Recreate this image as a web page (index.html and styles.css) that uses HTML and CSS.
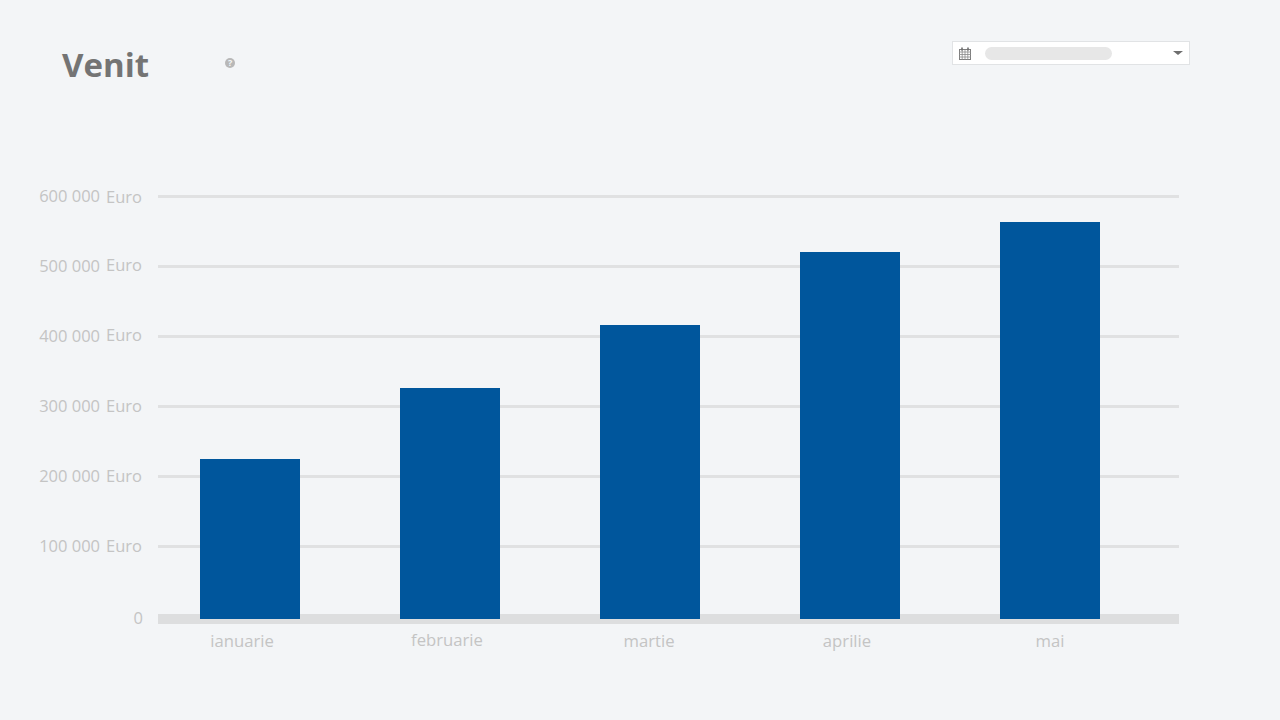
FILE: index.html
```html
<!DOCTYPE html>
<html lang="ro">
<head>
<meta charset="utf-8">
<title>Venit</title>
<link rel="stylesheet" href="styles.css">
</head>
<body>
<header class="header">
  <h1 class="title">Venit</h1>
  <span class="help">?</span>
  <div class="picker">
    <svg class="cal" width="12" height="13" viewBox="0 0 12 13" aria-hidden="true">
      <rect x="0.5" y="2.5" width="11" height="10" fill="#fff" stroke="#7d7d7d"/>
      <path d="M0 5h12M0 7.5h12M0 10h12M3.2 3v10M6 3v10M8.8 3v10" stroke="#8a8a8a" stroke-width="0.8" fill="none"/>
      <path d="M3 0.5v3M9 0.5v3" stroke="#6f6f6f" stroke-width="1.6" fill="none"/>
    </svg>
    <span class="pill"></span>
    <span class="caret"></span>
  </div>
</header>
<main class="chart">
  <div class="row"><div class="ylabel"><span>600 000</span><span class="unit low">Euro</span></div><div class="line"></div></div>
  <div class="row"><div class="ylabel"><span>500 000</span><span class="unit high">Euro</span></div><div class="line"></div></div>
  <div class="row"><div class="ylabel"><span>400 000</span><span class="unit high">Euro</span></div><div class="line"></div></div>
  <div class="row"><div class="ylabel"><span>300 000</span><span class="unit">Euro</span></div><div class="line"></div></div>
  <div class="row"><div class="ylabel"><span>200 000</span><span class="unit">Euro</span></div><div class="line"></div></div>
  <div class="row"><div class="ylabel"><span>100 000</span><span class="unit">Euro</span></div><div class="line"></div></div>
  <div class="row zero"><div class="ylabel"><span>0</span></div><div class="line base"></div></div>
  <div class="months">
    <span class="month m1">ianuarie</span>
    <span class="month m2">februarie</span>
    <span class="month m3">martie</span>
    <span class="month m4">aprilie</span>
    <span class="month m5">mai</span>
  </div>
  <div class="bars">
    <div class="bar" style="height:160px"></div>
    <div class="bar" style="height:231px"></div>
    <div class="bar" style="height:294px"></div>
    <div class="bar" style="height:367px"></div>
    <div class="bar" style="height:397px"></div>
  </div>
</main>
</body>
</html>
```
FILE: styles.css
```css
* { box-sizing: border-box; }
html, body { margin: 0; height: 720px; overflow: hidden; }
body { background: #f3f5f7; font-family: "Open Sans", "Liberation Sans", sans-serif; }

.header { display: flex; align-items: flex-start; height: 161px; padding: 41px 90px 0 62px; }
.title { margin: 2px 0 0; font-size: 33px; line-height: 44px; font-weight: 700; color: #747474; }
.help {
  width: 10px; height: 10px; margin: 17px 0 0 76px; border-radius: 50%;
  background: #b8b8b8; color: #f3f5f7; font-size: 9px; font-weight: 700;
  line-height: 10px; text-align: center;
}
.picker {
  display: flex; align-items: center; width: 238px; height: 24px; margin-left: auto;
  padding: 0 6px; background: #fff; border: 1px solid #e1e3e5;
}
.cal { flex: none; }
.pill { width: 127px; height: 13px; margin-left: 14px; border-radius: 7px; background: #e7e7e7; }
.caret {
  width: 0; height: 0; margin-left: auto; margin-right: 0;
  border-left: 5px solid transparent; border-right: 5px solid transparent; border-top: 4px solid #6e6e6e;
}

.chart { position: relative; }
.row { display: flex; align-items: center; height: 70px; }
.ylabel {
  display: flex; align-items: flex-start; justify-content: flex-end; gap: 6px;
  width: 142px; height: 22px; margin-right: 16px;
  font-size: 16.5px; line-height: 22px; color: #c4c4c4;
}
.unit.low { margin-top: 1px; }
.unit.high { margin-top: -1px; }
.line { width: 1021px; height: 3px; background: #e0e1e2; }
.zero { height: 48px; align-items: flex-end; }
.zero .ylabel { width: 143px; margin-right: 15px; }
.base { height: 10px; margin-bottom: 5px; background: #dddedf; }

.months { display: flex; margin: 1px 0 0 150px; }
.month { width: 200px; font-size: 16.7px; line-height: 22px; text-align: center; color: #c4c4c4; }
.m1 { padding-right: 16px; }
.m2 { padding-right: 6px; margin-top: -1px; }
.m3 { padding-right: 2px; }
.m4 { padding-right: 6px; }

.bars {
  position: absolute; top: 0; left: 200px; height: 458px;
  display: flex; align-items: flex-end; gap: 100px;
}
.bar { width: 100px; background: #00569c; }
```
